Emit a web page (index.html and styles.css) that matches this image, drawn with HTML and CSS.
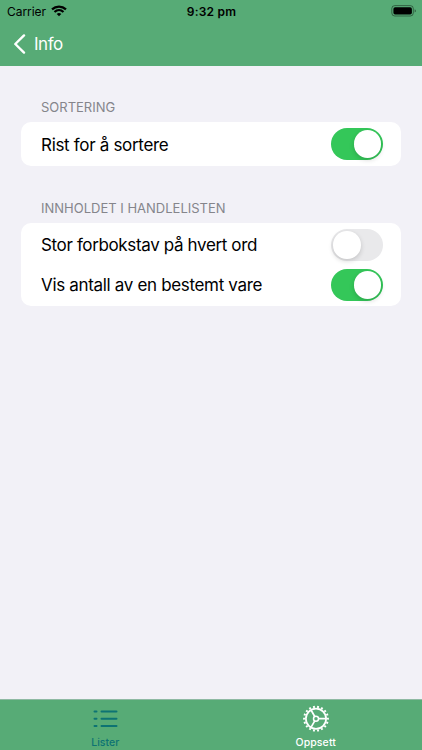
FILE: index.html
```html
<!DOCTYPE html>
<html lang="nb">
<head>
<meta charset="utf-8">
<title>Info</title>
<link rel="stylesheet" href="styles.css">
</head>
<body>
<header class="top">
  <div class="status">
    <div class="carrier"><span class="carrier-name">Carrier</span>
      <svg class="wifi" width="16" height="12" viewBox="0 0 16 12" fill="none" stroke="#000" stroke-width="2.200"><path d="M1 4.400C5 .6 11 .6 15 4.400M3.500 7C6.100 4.600 9.900 4.600 12.500 7"/><path d="M8 11.200L5.700 8.900Q8 7.100 10.300 8.900Z" fill="#000" stroke="none"/></svg>
    </div>
    <span class="clock">9:32 pm</span>
    <svg class="battery" width="26" height="12" viewBox="0 0 26 12"><rect x="1.800" y=".6" width="21.500" height="10.400" rx="3" fill="none" stroke="#000" stroke-opacity=".42"/><rect x="3.400" y="2.200" width="18.500" height="7.200" rx="1.700"/><path d="M24.700 4.200Q27 5.900 24.700 7.600Z" opacity=".5"/></svg>
  </div>
  <nav class="back">
    <svg width="13" height="20" viewBox="0 0 13 20" fill="none" stroke="#fff" stroke-width="2.400" stroke-linecap="round" stroke-linejoin="round"><path d="M11 1.400L2.300 10L11 18.600"/></svg>
    <span class="back-label">Info</span>
  </nav>
</header>
<main class="content">
  <section class="group">
    <h2 class="heading">SORTERING</h2>
    <div class="card single">
      <div class="row"><span class="label shake">Rist for å sortere</span><span class="switch on"></span></div>
    </div>
  </section>
  <section class="group">
    <h2 class="heading">INNHOLDET I HANDLELISTEN</h2>
    <div class="card double">
      <div class="row"><span class="label capital">Stor forbokstav på hvert ord</span><span class="switch"></span></div>
      <div class="row"><span class="label amount">Vis antall av en bestemt vare</span><span class="switch on"></span></div>
    </div>
  </section>
</main>
<footer class="tabs">
  <div class="tab lists">
    <svg width="28" height="28" viewBox="0 0 28 28" fill="none" stroke="currentColor" stroke-width="2" stroke-linecap="round"><path d="M3.500 6.500h2M3.500 13.700h2M3.500 20.900h2M10.500 6.500h15M10.500 13.700h15M10.500 20.900h15"/></svg>
    <span>Lister</span>
  </div>
  <div class="tab active">
    <svg width="28" height="28" viewBox="0 0 28 28" fill="none" stroke="currentColor"><circle cx="14" cy="13.700" r="10.100" stroke-width="1.700"/><circle cx="14" cy="13.700" r="11.900" stroke-width="2" pathLength="180" stroke-dasharray="4.600 5.400" stroke-dashoffset="2.300"/><circle cx="14" cy="13.700" r="2.500" stroke-width="1.500"/><path stroke-width="1.700" d="M16.500 13.700H24M12.750 11.530L9 5M12.750 15.870L9 22.400"/></svg>
    <span>Oppsett</span>
  </div>
</footer>
</body>
</html>
```
FILE: styles.css
```css
* { box-sizing: border-box; }
body {
  margin: 0;
  height: 750px;
  display: flex;
  flex-direction: column;
  overflow: hidden;
  background: #f2f1f7;
  color: #000;
  font-family: Inter, "Liberation Sans", sans-serif;
}
.top { height: 65.600px; background: #57ab76; }
.status {
  height: 22px;
  padding: 0 6px 0 7px;
  display: grid;
  grid-template-columns: 1fr auto 1fr;
  align-items: center;
  font-size: 12px;
}
.carrier { display: flex; align-items: center; gap: 5px; }
.carrier-name { letter-spacing: -0.050px; }
.clock { font-weight: 600; letter-spacing: 0.200px; }
.battery { justify-self: end; }
.back {
  height: 43px;
  padding-left: 13px;
  display: flex;
  align-items: center;
  gap: 8px;
  color: #fff;
  font-size: 17px;
}
.back-label { letter-spacing: -0.450px; }
.content { flex: 1; padding: 32px 21px 0; }
.group { margin-bottom: 32.500px; }
.heading {
  margin: 0;
  padding-left: 20px;
  height: 24.500px;
  line-height: 19px;
  font-size: 13px;
  font-weight: 400;
  color: #85858b;
}
.card {
  border-radius: 10px;
  background: #fff;
  padding: 2px 18px 2px 20px;
}
.single { height: 44px; }
.double { height: 83px; }
.row { height: 40px; display: flex; align-items: center; justify-content: space-between; }
.double .row + .row { height: 39.500px; }
.label { font-size: 17px; white-space: nowrap; }
.shake { letter-spacing: -0.310px; padding-top: 1px; }
.capital { letter-spacing: -0.360px; }
.amount { letter-spacing: -0.330px; }
.switch {
  width: 52px;
  height: 31.500px;
  padding: 2px;
  border-radius: 16px;
  background: #e9e9eb;
  display: flex;
}
.switch::before {
  content: "";
  width: 27.500px;
  height: 27.500px;
  border-radius: 50%;
  background: #fff;
  box-shadow: 0 2px 5px rgba(0, 0, 0, 0.160);
}
.switch.on { background: #34c759; justify-content: flex-end; }
.tabs {
  height: 51px;
  padding-right: 1px;
  background: #57ab76;
  border-top: 1px solid #8fb9a3;
  display: grid;
  grid-template-columns: 1fr 1fr;
}
.tab {
  padding-top: 5px;
  display: flex;
  flex-direction: column;
  align-items: center;
  gap: 3px;
  font-size: 10.500px;
  line-height: 13px;
  font-weight: 500;
}
.lists { color: #0d7373; }
.active { color: #fff; }
.active span { letter-spacing: 0.100px; }
```
